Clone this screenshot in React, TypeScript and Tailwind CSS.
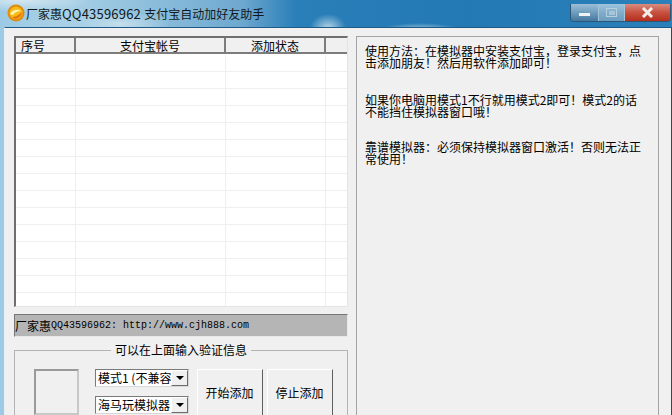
const rows = Array.from({ length: 15 }, (_, i) => i);

const cjk = "font-['Noto_Sans_CJK_SC','Liberation_Sans',sans-serif]";

const Logo = () => (
  <svg width="18" height="18" viewBox="0 0 18 18" className="shrink-0">
    <circle cx="9" cy="9" r="7.5" fill="#f6bb17" stroke="#e08a10" strokeWidth="2" />
    <path d="M3 10 C6 5 11 5 14 7 C11 7 8 8 6 11 Z" fill="#fff3b0" />
    <path d="M5 13 C8 13 12 11 15 8 C15 12 11 15 8 15 Z" fill="#e8760f" />
  </svg>
);

const Dropdown = ({ label }: { label: string }) => (
  <div className="flex h-[18px] w-[94px] border border-t-[#7a7a7a] border-l-[#7a7a7a] border-r-[#d8d8d8] border-b-[#d8d8d8] bg-white">
    <div className="flex-1 overflow-hidden whitespace-nowrap pl-[2px] text-[12px] leading-[16px] text-black">{label}</div>
    <div className="flex w-[17px] shrink-0 items-center justify-center border border-t-white border-l-white border-r-[#6c6c6c] border-b-[#6c6c6c] bg-[#f0f0f0]">
      <div className="h-0 w-0 border-x-[4px] border-t-[4px] border-x-transparent border-t-black" />
    </div>
  </div>
);

const Button = ({ label }: { label: string }) => (
  <button className="flex h-[60px] w-[66px] items-start justify-center border border-t-white border-l-white border-r-[#5f5f5f] border-b-[#5f5f5f] bg-[#f0f0f0] pr-[1px] pt-[14px] text-[12px] leading-[18px] text-black">
    {label}
  </button>
);

export default function App() {
  return (
    <div className={`flex h-[415px] w-[672px] flex-col overflow-hidden bg-[linear-gradient(90deg,#9ccae4_0%,#a8d0e6_10%,#8dbfdc_22%,#6ea8cf_36%,#2a7fb8_44%,#2379b4_70%,#2b80b9_100%)] ${cjk}`}>
      {/* title bar */}
      <div className="flex h-[27px] shrink-0 items-start bg-[radial-gradient(ellipse_18px_14px_at_328px_28px,#b4d3e6,transparent),radial-gradient(ellipse_40px_7px_at_420px_30px,#a9cce0,transparent),radial-gradient(ellipse_50px_12px_at_120px_24px,#c4deec,transparent),radial-gradient(ellipse_70px_12px_at_20px_0px,#d5e7f0,transparent)] pl-[7px] pt-[4px]">
        <Logo />
        <div className="ml-[1px] flex items-center whitespace-nowrap pt-[1px] text-[12px] leading-[17px] text-[#101820]">
          <span>厂家惠</span>
          <span className="text-[13px] tracking-[0.2px]">QQ43596962&nbsp;</span>
          <span>支付宝自动加好友助手</span>
        </div>
        <div className="ml-auto mr-[1px] flex h-[18px] overflow-hidden rounded-b-[4px] border border-t-0 border-[#2c5578] text-white">
          <div className="flex w-[27px] items-center justify-center bg-[linear-gradient(180deg,#9cbed6,#6f9dbe_50%,#44789f)]">
            <div className="mt-[3px] h-[3px] w-[11px] bg-[#eef2f5]" />
          </div>
          <div className="flex w-[27px] items-center justify-center border-x border-[#a6c4d8] bg-[linear-gradient(180deg,#a0c4dc,#7fadcb_50%,#6b9dbf)]">
            <div className="flex h-[9px] w-[11px] items-center justify-center border border-[#b7d0e0]">
              <div className="h-[4px] w-[6px] bg-[#a9c6d9]" />
            </div>
          </div>
          <div className="flex w-[45px] items-center justify-center bg-[linear-gradient(180deg,#d98c7f,#c85140_50%,#b42f1c)]">
            <svg width="13" height="11" viewBox="0 0 13 11">
              <path d="M2 1 L11 10 M11 1 L2 10" stroke="#f4ece8" strokeWidth="3" />
            </svg>
          </div>
        </div>
      </div>

      {/* client area */}
      <div className="ml-[4px] flex flex-1 gap-[8px] border border-[#e8eef2] border-t-[#1f5a86] border-r-[#2c4a60] bg-[#f0f0f0] pl-[9px] pr-[12px] pt-[8px]">
        {/* left column */}
        <div className="flex w-[334px] shrink-0 flex-col">
          <div className="flex h-[271px] flex-col overflow-hidden border-2 border-b border-r border-t-[#6f6f6f] border-l-[#6f6f6f] border-r-[#e4e4e4] border-b-[#e4e4e4] bg-white">
            <div className="grid h-[16px] shrink-0 grid-cols-[60px_150px_100px_1fr] border-b-2 border-[#7c7c7c] bg-[#f0f0f0] text-[12px] leading-[15px] text-black">
              <div className="border-r-2 border-[#7c7c7c] pl-[5px]">序号</div>
              <div className="border-r-2 border-[#7c7c7c] text-center">支付宝帐号</div>
              <div className="border-r-2 border-[#7c7c7c] text-center">添加状态</div>
              <div />
            </div>
            <div className="h-[1px] shrink-0" />
            {rows.map((r) => (
              <div key={r} className="grid h-[17px] shrink-0 grid-cols-[60px_150px_100px_1fr] border-b border-[#efefef]">
                <div className="border-r border-[#efefef]" />
                <div className="border-r border-[#efefef]" />
                <div className="border-r border-[#efefef]" />
                <div />
              </div>
            ))}
          </div>

          <div className="mt-[7px] flex h-[23px] items-center whitespace-nowrap border border-t-[#777777] border-l-[#777777] border-r-[#e8e8e8] border-b-[#e8e8e8] bg-[#b5b5b5] text-[12px] text-black">
            <span>厂家惠</span>
            <span className="font-['Liberation_Mono',monospace] text-[10px]">QQ43596962: http://www.cjh888.com</span>
          </div>

          <fieldset className="mt-[6px] border border-[#b4b4b4] pl-[19px]">
            <legend className="ml-[77px] px-[4px] text-[12px] leading-[14px] text-black">可以在上面输入验证信息</legend>
            <div className="flex pt-[12px]">
              <div className="h-[46px] w-[45px] shrink-0 border-2 border-t-[#9a9a9a] border-l-[#9a9a9a] border-r-[#c8c8c8] border-b-[#c8c8c8]" />
              <div className="ml-[16px] flex shrink-0 flex-col gap-[9px]">
                <Dropdown label="模式1 (不兼容" />
                <Dropdown label="海马玩模拟器" />
              </div>
              <div className="ml-[8px] flex gap-[4px]">
                <Button label="开始添加" />
                <Button label="停止添加" />
              </div>
            </div>
          </fieldset>
        </div>

        {/* right panel */}
        <div className="flex-1 border border-[#a3a3a3] pl-[8px] pt-[8px] text-[12px] leading-[12px] text-black">
          <p>
            使用方法：在模拟器中安装支付宝，登录支付宝，点
            <br />
            击添加朋友！然后用软件添加即可！
          </p>
          <p className="mt-[25px]">
            如果你电脑用模式1不行就用模式2即可！模式2的话
            <br />
            不能挡住模拟器窗口哦！
          </p>
          <p className="mt-[23px]">
            靠谱模拟器：必须保持模拟器窗口激活！否则无法正
            <br />
            常使用！
          </p>
        </div>
      </div>
    </div>
  );
}
